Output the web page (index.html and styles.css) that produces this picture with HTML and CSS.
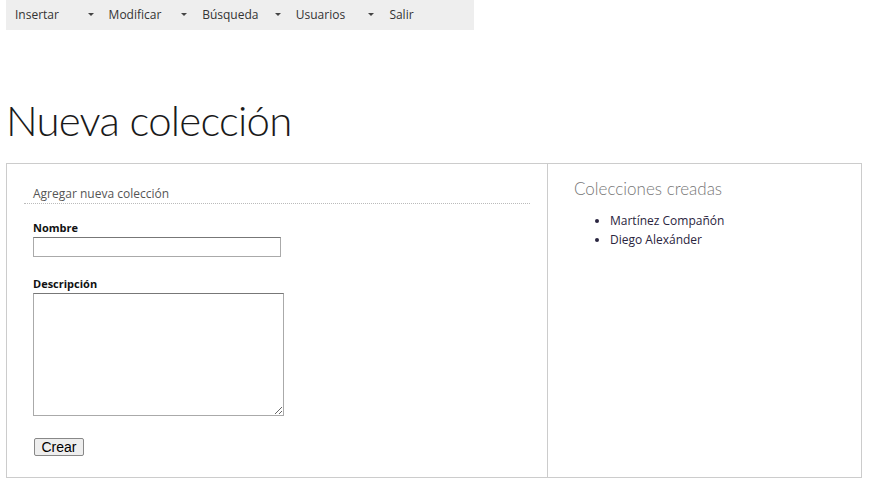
FILE: index.html
```html
<!DOCTYPE html>
<html lang="es">
<head>
<meta charset="utf-8">
<title>Nueva colección</title>
<link rel="stylesheet" href="styles.css">
</head>
<body>
<nav class="menu">
  <div class="item"><span>Insertar</span><span class="caret"></span></div>
  <div class="item"><span>Modificar</span><span class="caret"></span></div>
  <div class="item"><span>Búsqueda</span><span class="caret"></span></div>
  <div class="item"><span>Usuarios</span><span class="caret"></span></div>
  <div class="item"><span>Salir</span></div>
</nav>
<h1 class="title">Nueva colección</h1>
<div class="panel">
  <section class="left">
    <h2 class="legend">Agregar nueva colección</h2>
    <form class="form">
      <label class="lbl" for="nombre">Nombre</label>
      <input class="inp" id="nombre" type="text">
      <label class="lbl lbl2" for="desc">Descripción</label>
      <textarea class="ta" id="desc"></textarea>
      <button class="btn" type="button">Crear</button>
    </form>
  </section>
  <section class="right">
    <h2 class="rtitle">Colecciones creadas</h2>
    <ul class="list">
      <li>Martínez Compañón</li>
      <li>Diego Alexánder</li>
    </ul>
  </section>
</div>
</body>
</html>
```
FILE: styles.css
```css
html, body { margin: 0; padding: 0; background: #fff; }
body { padding: 0 6px; font-family: "Open Sans", "DejaVu Sans", sans-serif; }
.menu {
  display: flex;
  width: 468px;
  height: 30px;
  background: #eeeeee;
}
.item {
  width: 93.6px;
  box-sizing: border-box;
  display: flex;
  align-items: center;
  justify-content: space-between;
  padding: 0 0 1px 9px;
  font-size: 12px;
  color: #333;
}
.caret {
  width: 0; height: 0;
  border-left: 3px solid transparent;
  border-right: 3px solid transparent;
  border-top: 3px solid #444;
  margin-right: 6px;
}
.title {
  margin: 60px 0 0 0;
  font-family: "Lato", sans-serif;
  font-weight: 300;
  font-size: 42px;
  line-height: 60px;
  padding-bottom: 13px;
  color: #1a1a1a;
  letter-spacing: -0.8px;
}
.panel {
  display: flex;
  width: 856px;
  height: 315px;
  box-sizing: border-box;
  border: 1px solid #cccccc;
}
.left {
  width: 541px;
  box-sizing: border-box;
  border-right: 1px solid #cccccc;
  padding: 22px 17px 0 17px;
}
.legend {
  margin: 0;
  font-weight: normal;
  font-size: 12px;
  color: #555;
  padding: 0 0 1px 9px;
  line-height: 16px;
  border-bottom: 1px dotted #bbb;
}
.form {
  display: flex;
  flex-direction: column;
  align-items: flex-start;
  padding: 17px 0 0 9px;
}
.lbl {
  font-family: "Open Sans", sans-serif;
  font-weight: bold;
  font-size: 11px;
  color: #111;
  line-height: 14px;
  margin-bottom: 2px;
}
.lbl2 { margin-top: 20px; }
.inp {
  width: 248px;
  height: 20px;
  box-sizing: border-box;
  border: 1px solid #aaa;
  border-top-color: #777;
  margin: 0;
  padding: 0;
}
.ta {
  width: 251px;
  height: 123px;
  box-sizing: border-box;
  border: 1px solid #aaa;
  border-top-color: #777;
  margin: 0;
  padding: 0;
  resize: both;
}
.btn {
  margin: 22px 0 0 1px;
  width: 50px;
  height: 18px;
  padding: 0;
  font-family: "Liberation Sans", Arial, sans-serif;
  font-size: 14px;
  line-height: 16px;
  background: #eee;
  border: 1px solid #888;
  border-radius: 2px;
  color: #000;
}
.right {
  flex: 1;
  padding: 14px 0 0 26px;
}
.rtitle {
  margin: 0;
  font-family: "Lato", sans-serif;
  font-weight: 300;
  font-size: 17px;
  color: #777;
  line-height: 22px;
}
.list {
  margin: 11px 0 0 0;
  padding: 0 0 0 36px;
  font-size: 12px;
  line-height: 19px;
  color: #2a2540;
}
```
